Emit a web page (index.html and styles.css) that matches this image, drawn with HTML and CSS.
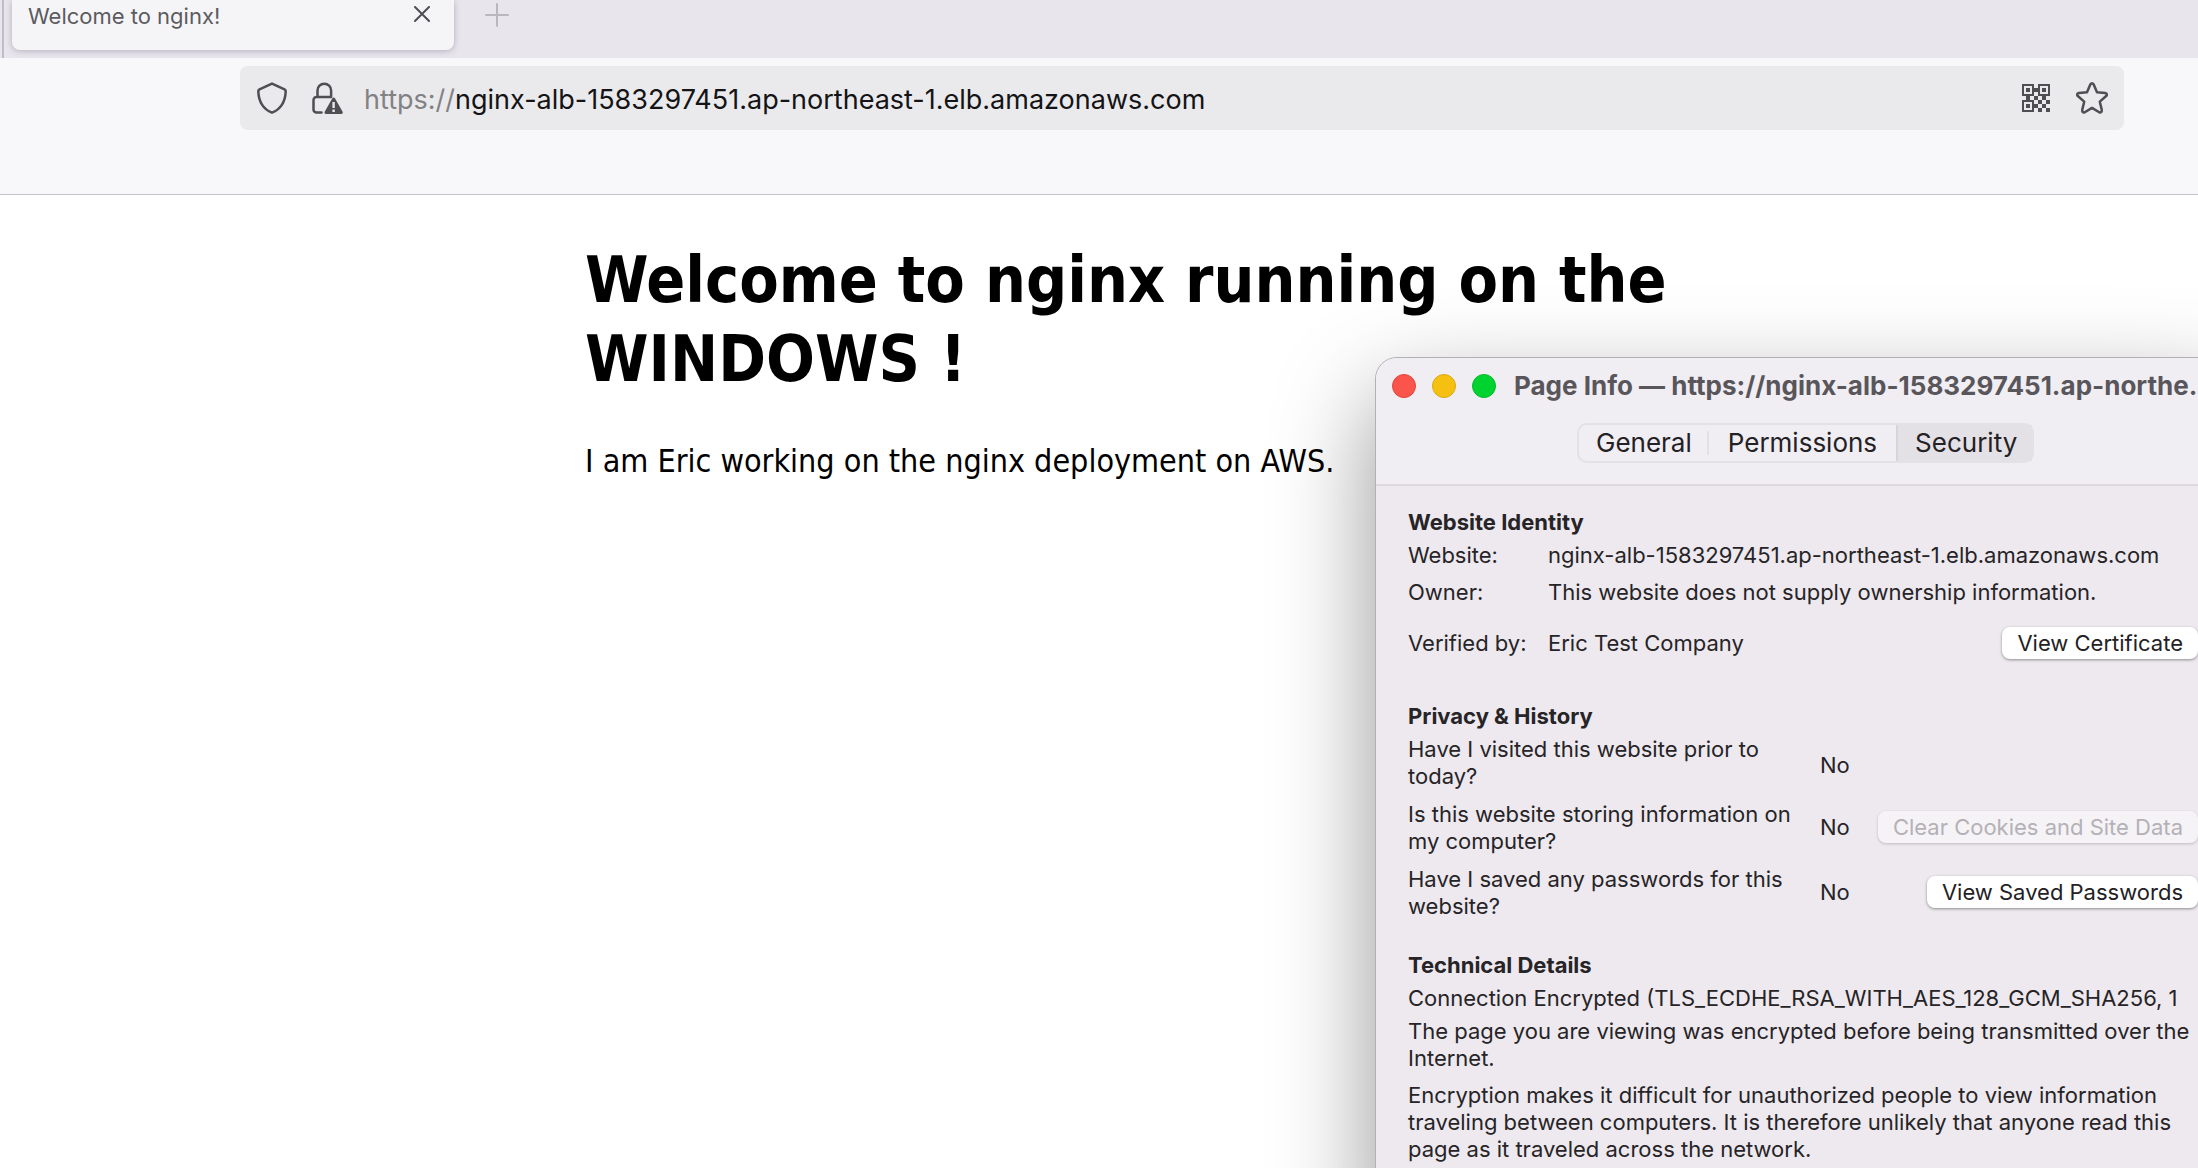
FILE: index.html
```html
<!DOCTYPE html>
<html lang="en">
<head>
<meta charset="utf-8">
<title>Welcome to nginx!</title>
<link rel="stylesheet" href="styles.css">
</head>
<body>
<header class="chrome">
  <div class="tabstrip">
    <div class="tab">
      <span class="tab-title">Welcome to nginx!</span>
      <button class="icon-button" type="button" aria-label="Close tab">
        <svg class="icon-close" viewBox="0 0 16 16"><path d="M1 1l14 14M15 1L1 15"/></svg>
      </button>
    </div>
    <button class="icon-button new-tab" type="button" aria-label="New tab">
      <svg class="icon-plus" viewBox="0 0 24 24"><path d="M12 1v22M1 12h22"/></svg>
    </button>
  </div>
  <div class="toolbar">
    <div class="urlbar">
      <button class="icon-button" type="button" aria-label="Tracking protection">
        <svg class="icon" viewBox="0 0 32 32"><path d="M16 1.600L28.500 7.300Q29.800 8 29.700 9.500C29.300 18.500 26.500 26.500 16 30.700C5.500 26.500 2.700 18.500 2.300 9.500Q2.200 8 3.500 7.300Z"/></svg>
      </button>
      <button class="icon-button lock" type="button" aria-label="Connection security">
        <svg class="icon" viewBox="0 0 32 32"><path d="M5.500 15V8.500a6.800 6.800 0 0 1 13.600 0V15M9.500 30.500H4.500a3 3 0 0 1-3-3V18a3 3 0 0 1 3-3h14.600"/><path class="warn" fill-rule="evenodd" d="M20.200 16.500c.8-1.300 2.100-1.300 2.900 0l7.500 13.200c.6 1.200 0 2.300-1.400 2.300H14.100c-1.400 0-2-1.100-1.400-2.300ZM20.400 20v6h2.400v-6ZM20.400 27.500V30h2.400v-2.500Z"/></svg>
      </button>
      <label class="scheme" for="address">https://</label>
      <input class="address" id="address" type="text" value="nginx-alb-1583297451.ap-northeast-1.elb.amazonaws.com">
      <button class="icon-button" type="button" aria-label="QR code">
        <svg class="icon-qr" viewBox="0 0 28 28" shape-rendering="crispEdges"><path fill-rule="evenodd" d="M0 0h12v12H0ZM2 2v8h8V2ZM4 4h4v4H4ZM16 0h12v12H16ZM18 2v8h8V2ZM20 4h4v4h-4ZM0 16h12v12H0ZM2 18v8h8v-8ZM4 20h4v4H4ZM12 4h4v4h-4ZM4 12h4v4H4ZM12 12h4v4h-4ZM20 12h4v4h-4ZM16 16h4v4h-4ZM24 16h4v4h-4ZM12 20h4v4h-4ZM20 20h4v4h-4ZM16 24h4v4h-4ZM24 24h4v4h-4Z"/></svg>
      </button>
      <button class="icon-button star" type="button" aria-label="Bookmark this page">
        <svg class="icon" viewBox="0 0 32 32"><path d="M14.300 2.500Q16 0 17.700 2.500L21 10.300L29.200 11Q32 11.800 30.200 14L23.800 19.600L25.800 28Q25.900 31 23.200 30.300L16 25.900L8.800 30.300Q6.100 31 6.200 28L8.200 19.600L1.800 14Q0 11.800 2.800 11L11 10.300Z"/></svg>
      </button>
    </div>
  </div>
</header>
<main class="page">
  <h1>Welcome to nginx running on the WINDOWS !</h1>
  <p>I am Eric working on the nginx deployment on AWS.</p>
</main>
<section class="dialog" role="dialog" aria-labelledby="dialog-title">
  <header class="dialog-head">
    <div class="titlebar">
      <button class="light red" type="button" aria-label="Close"></button>
      <button class="light yellow" type="button" aria-label="Minimize"></button>
      <button class="light green" type="button" aria-label="Zoom"></button>
      <h2 class="dialog-title" id="dialog-title">Page Info — https://nginx-alb-1583297451.ap-northe…</h2>
    </div>
    <nav class="segments">
      <button class="segment" type="button">General</button>
      <button class="segment" type="button">Permissions</button>
      <button class="segment selected" type="button">Security</button>
    </nav>
  </header>
  <div class="dialog-body">
    <h3>Website Identity</h3>
    <table class="identity">
      <tr><th scope="row">Website:</th><td colspan="2">nginx-alb-1583297451.ap-northeast-1.elb.amazonaws.com</td></tr>
      <tr><th scope="row">Owner:</th><td colspan="2">This website does not supply ownership information.</td></tr>
      <tr class="verified"><th scope="row">Verified by:</th><td>Eric Test Company</td><td class="action"><button class="push" type="button">View Certificate</button></td></tr>
    </table>
    <h3>Privacy &amp; History</h3>
    <table class="history">
      <tr><th scope="row">Have I visited this website prior to today?</th><td>No</td><td></td></tr>
      <tr><th scope="row">Is this website storing information on my computer?</th><td>No</td><td class="action"><button class="push" type="button" disabled>Clear Cookies and Site Data</button></td></tr>
      <tr><th scope="row">Have I saved any passwords for this website?</th><td>No</td><td class="action"><button class="push" type="button">View Saved Passwords</button></td></tr>
    </table>
    <h3>Technical Details</h3>
    <p class="cipher">Connection Encrypted (TLS_ECDHE_RSA_WITH_AES_128_GCM_SHA256, 1</p>
    <p>The page you are viewing was encrypted before being transmitted over the Internet.</p>
    <p>Encryption makes it difficult for unauthorized people to view information traveling between computers. It is therefore unlikely that anyone read this page as it traveled across the network.</p>
  </div>
</section>
</body>
</html>
```
FILE: styles.css
```css
* {
  box-sizing: border-box;
}

body {
  position: relative;
  min-height: 100vh;
  margin: 0;
  overflow: hidden;
  background: #fff;
  color: #000;
  font-family: Inter, "Liberation Sans", sans-serif;
}

button {
  font-family: inherit;
}

svg {
  display: block;
  fill: none;
  stroke: currentColor;
  stroke-width: 2;
  stroke-linecap: round;
  stroke-linejoin: round;
}

.icon-button {
  padding: 0;
  border: 0;
  background: none;
  color: #4f4e52;
}

.icon {
  width: 32px;
  height: 32px;
  stroke-width: 2.500;
}

.icon-close {
  width: 16px;
  height: 16px;
}

.icon-plus {
  width: 24px;
  height: 24px;
  color: #b9b7bd;
}

.icon-qr {
  width: 28px;
  height: 28px;
  fill: currentColor;
  stroke: none;
}

.warn {
  fill: currentColor;
  stroke: none;
}

/* Browser chrome */

.chrome {
  border-bottom: 1px solid #c4c4c8;
  background: #f8f8fb;
}

.tabstrip {
  display: flex;
  height: 58px;
  padding-left: 12px;
  background: linear-gradient(to right, transparent 2px, #c1bdc8 2px, #c1bdc8 4px, transparent 4px) #e8e6ec;
}

.tab {
  display: flex;
  justify-content: space-between;
  width: 442px;
  height: 50px;
  padding: 0 24px 0 16px;
  border-radius: 0 0 8px 8px;
  background: #f5f5f8;
  box-shadow: 0 1px 6px rgba(80, 70, 110, 0.35);
}

.tab-title {
  color: #5b5b60;
  font-size: 22px;
  line-height: 32px;
}

.tab .icon-button {
  height: 28px;
}

.new-tab {
  height: 30px;
  margin-left: 31px;
}

.toolbar {
  padding: 8px 74px 64px 240px;
}

.urlbar {
  display: flex;
  align-items: center;
  height: 64px;
  padding: 0 16px;
  border-radius: 8px;
  background: #eaeaec;
  font-size: 27px;
}

.lock {
  margin: 0 20px 0 24px;
}

.scheme {
  padding-top: 2px;
  color: #828285;
}

.address {
  flex: 1;
  min-width: 0;
  padding: 2px 0 0;
  border: 0;
  outline: 0;
  background: none;
  color: #141416;
  font: inherit;
}

.star {
  margin-left: 26px;
}

/* Served page */

.page {
  width: 1120px;
  max-width: 70%;
  margin: 46px 0 0 585px;
  font-family: "DejaVu Sans Condensed", "DejaVu Sans", sans-serif;
  font-stretch: condensed;
  font-size: 32px;
}

.page h1 {
  margin: 0;
  font-size: 64px;
  line-height: 79px;
}

.page p {
  margin: 42px 0 0;
  line-height: 40px;
}

/* Page Info window */

.dialog {
  position: absolute;
  top: 357px;
  right: -40px;
  bottom: -60px;
  left: 1375px;
  overflow: hidden;
  border: 1px solid #b2b0b4;
  border-radius: 22px;
  background: #ede9ee;
  box-shadow: 0 40px 100px rgba(0, 0, 0, 0.42);
  color: #262427;
  font-size: 22px;
  line-height: 27px;
}

.dialog-head {
  display: flex;
  flex-direction: column;
  gap: 21px;
  padding: 12px 0 21px;
  border-bottom: 2px solid #dbd9dc;
  background: #f0edf3;
}

.titlebar {
  display: flex;
  align-items: center;
  gap: 16px;
  padding-left: 16px;
}

.light {
  flex: none;
  width: 24px;
  height: 24px;
  padding: 0;
  border: 1px solid;
  border-radius: 50%;
}

.red {
  border-color: #e2443c;
  background: #fb544a;
}

.yellow {
  border-color: #dba90f;
  background: #f5c00f;
}

.green {
  border-color: #00bb29;
  background: #00d22f;
}

.dialog-title {
  margin: 0 0 0 2px;
  color: #59565b;
  font-size: 26px;
  line-height: 32px;
  white-space: nowrap;
}

.segments {
  display: flex;
  gap: 2px;
  align-self: flex-start;
  height: 40px;
  margin-left: 201px;
  border: 2px solid #e3e0e6;
  border-radius: 10px;
}

.segment {
  padding: 0 17px;
  border: 0;
  background: none;
  color: #232124;
  font-size: 26px;
  line-height: 36px;
}

.segment:first-child {
  background: linear-gradient(#e3e0e6, #e3e0e6) right / 2px 24px no-repeat;
}

.selected {
  padding: 0 15px 0 17px;
  border-left: 2px solid #d7d5da;
  background: #e3e0e6;
}

.dialog-body {
  padding: 23px 39px 0 32px;
}

.dialog-body h3 {
  margin: 0 0 6px;
  font-size: 22px;
  font-weight: 700;
}

.dialog-body p {
  max-width: 800px;
  margin: 0 0 10px;
}

.dialog-body .cipher {
  margin-bottom: 6px;
  white-space: nowrap;
}

table {
  width: 100%;
  border-collapse: collapse;
}

th,
td {
  padding: 0 0 10px;
  font-weight: 400;
  text-align: left;
}

.identity {
  margin-bottom: 44px;
}

.identity th {
  width: 140px;
}

.verified td,
.verified th {
  padding: 11px 0 0;
}

.history {
  margin-bottom: 21px;
}

.history th {
  width: 412px;
  padding: 0 20px 11px 0;
}

.history tr:first-child td {
  padding-bottom: 6px;
}

.history tr:nth-child(n + 2) td {
  padding-bottom: 13px;
}

.dialog-body .action {
  text-align: right;
}

.push {
  height: 32px;
  padding: 0 15px;
  border: 0;
  border-radius: 8px;
  background: #fff;
  box-shadow: 0 1px 3px rgba(0, 0, 0, 0.4);
  color: #232124;
  font-size: 22px;
  line-height: 32px;
}

.push:disabled {
  background: #f5f3f6;
  box-shadow: 0 1px 3px rgba(0, 0, 0, 0.2);
  color: #b4b1b6;
}
```
